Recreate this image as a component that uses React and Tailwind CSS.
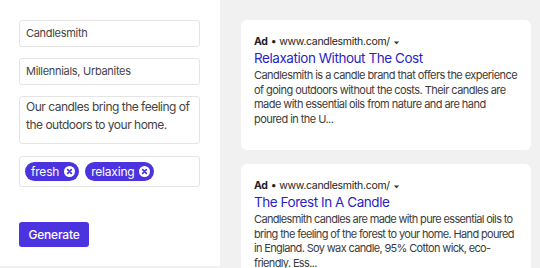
import { useState } from 'react';

const ads = [
  {
    title: 'Relaxation Without The Cost',
    body: 'Candlesmith is a candle brand that offers the experience of going outdoors without the costs. Their candles are made with essential oils from nature and are hand poured in the U...',
    tracking: 'tracking-[-0.55px]',
  },
  {
    title: 'The Forest In A Candle',
    body: 'Candlesmith candles are made with pure essential oils to bring the feeling of the forest to your home. Hand poured in England. Soy wax candle, 95% Cotton wick, eco-friendly. Ess...',
    tracking: 'tracking-[-0.65px]',
  },
];

const Tag = ({ label }) => (
  <span className="flex items-center gap-[5px] h-[19px] pl-[6px] pr-[4px] rounded-full bg-[#4b33df] text-white text-[12px] tracking-[-0.2px]">
    {label}
    <svg width="11" height="11" viewBox="0 0 12 12">
      <circle cx="6" cy="6" r="6" fill="#fff" />
      <path d="M4 4l4 4M8 4l-4 4" stroke="#4b33df" strokeWidth="1.8" strokeLinecap="round" />
    </svg>
  </span>
);

const AdCard = ({ ad }) => (
  <div className="bg-white rounded-[6px] px-[13px] pt-[15px] pb-[24px]">
    <div className="flex items-center text-[10.5px] text-[#222] leading-[14px] tracking-[-0.3px]">
      <span className="font-bold">Ad</span>
      <span className="mx-[3px]">•</span>
      <span>www.candlesmith.com/</span>
      <svg width="9" height="9" viewBox="0 0 10 10" className="ml-[2px]">
        <path d="M2 4h6L5 7z" fill="#333" />
      </svg>
    </div>
    <h3 className="text-[13.5px] text-[#2a1fc4] leading-[18px] tracking-[-0.45px]">{ad.title}</h3>
    <p className={`text-[11px] text-[#3c3c3c] leading-[14.5px] mt-[1px] -mr-[1px] ${ad.tracking}`}>{ad.body}</p>
  </div>
);

export default function App() {
  const [tags] = useState(['fresh', 'relaxing']);

  return (
    <div className="flex w-[540px] h-[268px] bg-[#f1f1f1] overflow-hidden" style={{ fontFamily: 'Inter, "Noto Sans", sans-serif' }}>
      <div className="w-[220px] h-[266px] bg-white px-[19px] pt-[20px] flex flex-col shrink-0">
        <div className="flex flex-col gap-[11px] w-[181px] text-[11px] tracking-[-0.3px] text-[#444]">
          <div className="h-[27px] border border-[#e4e4e4] rounded-[3px] px-[6px] flex items-center">
            Candlesmith
          </div>
          <div className="h-[27px] border border-[#e4e4e4] rounded-[3px] px-[6px] flex items-center">
            Millennials, Urbanites
          </div>
          <div className="h-[48px] border border-[#e4e4e4] rounded-[3px] px-[6px] pt-[1px] text-[12px] leading-[18px] tracking-[-0.5px]">
            Our candles bring the feeling of the outdoors to your home.
          </div>
          <div className="h-[31px] mt-[1px] border border-[#e4e4e4] rounded-[3px] px-[5px] flex items-center gap-[6px]">
            {tags.map((t) => (
              <Tag key={t} label={t} />
            ))}
          </div>
        </div>
        <button className="mt-[35px] w-[70px] h-[25px] rounded-[3px] bg-[#4b33df] text-white text-[12px] font-medium tracking-[-0.2px]">
          Generate
        </button>
      </div>
      <div className="flex-1 pl-[21px] pr-[9px] pt-[20px] flex flex-col gap-[14px]">
        {ads.map((ad) => (
          <AdCard key={ad.title} ad={ad} />
        ))}
      </div>
    </div>
  );
}
